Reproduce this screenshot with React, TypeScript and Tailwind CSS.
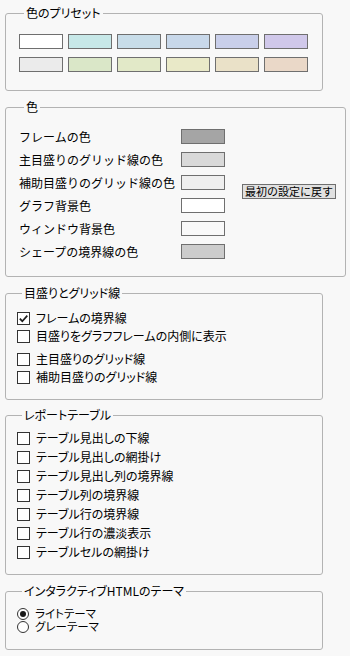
import React from 'react';

const font = "font-['Noto_Sans_CJK_JP',sans-serif]";

const presetRows = [
    ['#ffffff', '#c7e8e8', '#c8dde9', '#c8d8ea', '#c9cfea', '#d0c8ea'],
    ['#ebebeb', '#dae7c8', '#e2e9c8', '#e9e9c8', '#eae1c8', '#ead8c8'],
];

const colorRows = [
    { label: 'フレームの色', color: '#a5a5a5' },
    { label: '主目盛りのグリッド線の色', color: '#d9d9d9' },
    { label: '補助目盛りのグリッド線の色', color: '#efefef' },
    { label: 'グラフ背景色', color: '#ffffff' },
    { label: 'ウィンドウ背景色', color: '#f9f9f9' },
    { label: 'シェープの境界線の色', color: '#cccccc' },
];

const tableOptions = [
    'テーブル見出しの下線',
    'テーブル見出しの網掛け',
    'テーブル見出し列の境界線',
    'テーブル列の境界線',
    'テーブル行の境界線',
    'テーブル行の濃淡表示',
    'テーブルセルの網掛け',
];

function Group({ title, className, children }: { title: string; className: string; children: React.ReactNode }) {
    return (
        <fieldset className={`border border-[#b3b3b3] rounded-[3px] ${className}`}>
            <legend className="ml-[5px] px-[2px] text-[12px] leading-[14px] text-black [font-feature-settings:'palt']">
                {title}
            </legend>
            {children}
        </fieldset>
    );
}

function Swatch({ color }: { color: string }) {
    return <div className="w-[44px] h-[15px] border border-[#6f6f6f]" style={{ backgroundColor: color }} />;
}

function Check({ label, checked = false, className = '' }: { label: string; checked?: boolean; className?: string }) {
    return (
        <div className={`flex items-center h-[18px] ${className}`}>
            <div className="w-[13px] h-[13px] border border-[#333333] bg-white flex items-center justify-center">
                {checked && (
                    <svg width="11" height="11" viewBox="0 0 11 11">
                        <polyline points="1.8,5.6 4.3,8.2 9.3,2.6" fill="none" stroke="#1e1e1e" strokeWidth="1.7" />
                    </svg>
                )}
            </div>
            <span className="ml-[6px] text-[12px] leading-none text-black [font-feature-settings:'palt']">{label}</span>
        </div>
    );
}

function Radio({ label, checked = false }: { label: string; checked?: boolean }) {
    return (
        <div className="flex items-center h-[13px]">
            <div className="w-[12px] h-[12px] rounded-full border border-[#333333] bg-white flex items-center justify-center">
                {checked && <div className="w-[6px] h-[6px] rounded-full bg-[#1a1a1a]" />}
            </div>
            <span className="ml-[6px] text-[11.5px] leading-[13px] text-black [font-feature-settings:'palt']">{label}</span>
        </div>
    );
}

export default function App() {
    return (
        <div className={`w-[350px] h-[656px] bg-[#f8f8f8] pl-[5px] pt-[6px] ${font}`}>
            <Group title="色のプリセット" className="w-[318px] pl-[13px] pt-[14px] pb-[18px]">
                <div className="flex flex-col gap-[8px]">
                    {presetRows.map((row, i) => (
                        <div key={i} className="flex gap-[5px]">
                            {row.map((c, j) => (
                                <Swatch key={j} color={c} />
                            ))}
                        </div>
                    ))}
                </div>
            </Group>

            <Group title="色" className="mt-[9px] w-[341px] pl-[13px] pt-[11px] pb-[13px]">
                <div className="flex items-center">
                    <div className="flex flex-col">
                        {colorRows.map((r) => (
                            <div key={r.label} className="flex items-center h-[23px]">
                                <span className="w-[162px] text-[12px] leading-none text-black whitespace-nowrap">{r.label}</span>
                                <Swatch color={r.color} />
                            </div>
                        ))}
                    </div>
                    <button className="ml-[17px] mb-[5px] h-[15px] px-[2px] border border-[#6f6f6f] bg-[#e1e1e1] text-[11px] leading-none text-black whitespace-nowrap">
                        最初の設定に戻す
                    </button>
                </div>
            </Group>

            <Group title="目盛りとグリッド線" className="mt-[9px] w-[318px] pl-[11px] pt-[9px] pb-[13px]">
                <Check label="フレームの境界線" checked />
                <Check label="目盛りをグラフフレームの内側に表示" />
                <Check label="主目盛りのグリッド線" className="mt-[5px]" />
                <Check label="補助目盛りのグリッド線" />
            </Group>

            <Group title="レポートテーブル" className="mt-[8px] w-[318px] pl-[11px] pt-[7px] pb-[13px]">
                <div className="flex flex-col gap-[1px]">
                    {tableOptions.map((t) => (
                        <Check key={t} label={t} />
                    ))}
                </div>
            </Group>

            <Group title="インタラクティブHTMLのテーマ" className="mt-[9px] w-[318px] pl-[11px] pt-[9px] pb-[16px]">
                <Radio label="ライトテーマ" checked />
                <Radio label="グレーテーマ" />
            </Group>
        </div>
    );
}
